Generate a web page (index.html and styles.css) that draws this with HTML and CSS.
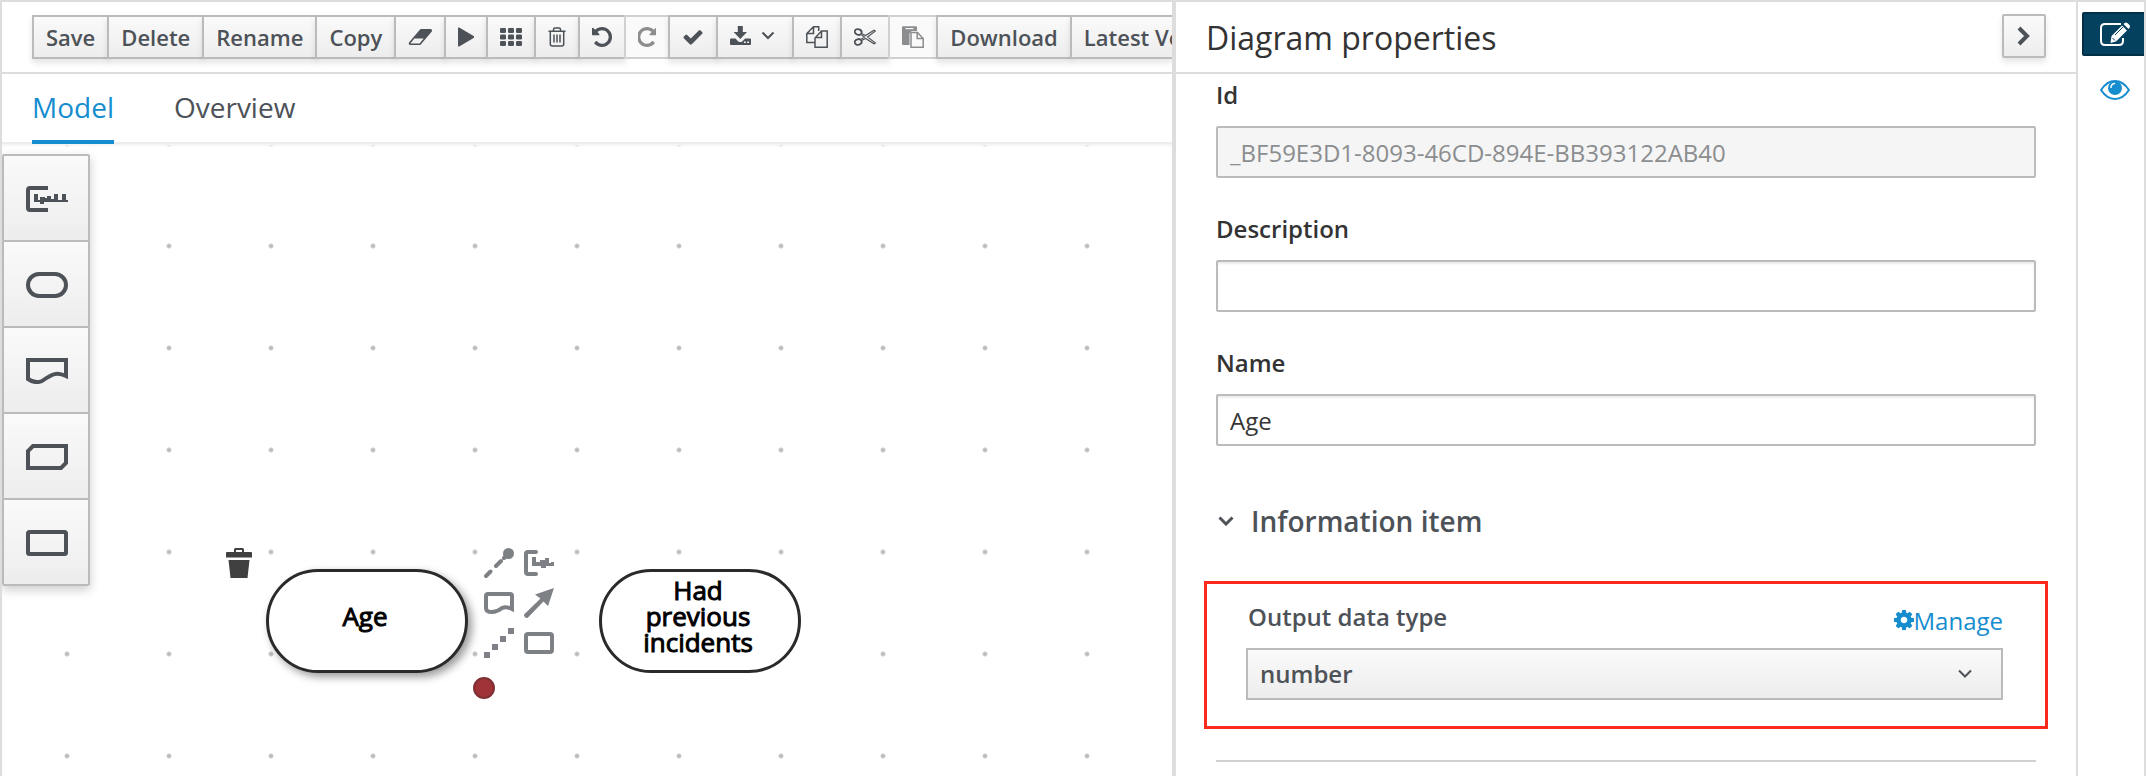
FILE: index.html
```html
<!DOCTYPE html>
<html lang="en">
<head>
<meta charset="utf-8">
<title>Diagram editor</title>
<link rel="stylesheet" href="styles.css">
</head>
<body>
<div class="workbench">
  <main class="editor">
    <div class="toolbar" role="toolbar" aria-label="Editor actions">
      <button class="btn" type="button">Save</button>
      <button class="btn" type="button">Delete</button>
      <button class="btn" type="button">Rename</button>
      <button class="btn" type="button">Copy</button>
      <button class="btn" type="button" aria-label="Clear">
        <svg width="24" height="16" viewBox="0 256 1984 1280" preserveAspectRatio="none"><path d="M960 1408l336-384h-768l-336 384h768zm1013-1077q15 34 9.500 71.500t-30.500 65.500l-896 1024q-38 44-96 44h-768q-38 0-69.500-20.500t-47.500-54.500q-15-34-9.500-71.500t30.500-65.500l896-1024q38-44 96-44h768q38 0 69.500 20.500t47.500 54.500z"/></svg>
      </button>
      <button class="btn" type="button" aria-label="Run">
        <svg width="16" height="20" viewBox="0 0 16 20"><path d="M0 1.200Q0 0 1.200.6L16 9.200q1 .8 0 1.600L1.200 19.400Q0 20 0 18.800z"/></svg>
      </button>
      <button class="btn" type="button" aria-label="Switch grid">
        <svg width="22" height="18" viewBox="0 0 22 18"><g><rect x="0" y="0" width="6" height="5" rx="1.300"/><rect x="8" y="0" width="6" height="5" rx="1.300"/><rect x="16" y="0" width="6" height="5" rx="1.300"/><rect x="0" y="6.500" width="6" height="5" rx="1.300"/><rect x="8" y="6.500" width="6" height="5" rx="1.300"/><rect x="16" y="6.500" width="6" height="5" rx="1.300"/><rect x="0" y="13" width="6" height="5" rx="1.300"/><rect x="8" y="13" width="6" height="5" rx="1.300"/><rect x="16" y="13" width="6" height="5" rx="1.300"/></g></svg>
      </button>
      <button class="btn" type="button" aria-label="Delete selection">
        <svg class="line" width="18" height="20" viewBox="0 0 18 20" stroke-width="1.500"><path d="M.5 4.200h17M5.500 4V2.500q0-1.500 1.500-1.500h4q1.500 0 1.500 1.500V4M2.300 4.500v12.500q0 2 2 2h9.400q2 0 2-2V4.500M6 7.500v8M9 7.500v8M12 7.500v8"/></svg>
      </button>
      <button class="btn" type="button" aria-label="Undo">
        <svg width="20" height="20" viewBox="128 128 1536 1536"><path d="M1664 896q0 156-61 298t-164 245-245 164-298 61q-172 0-327-72.500t-264-204.500q-7-10-6.500-22.500t8.500-20.500l137-138q10-9 25-9 16 2 23 12 73 95 179 147t225 52q104 0 198.500-40.500t163.500-109.500 109.500-163.500 40.500-198.500-40.500-198.500-109.500-163.500-163.500-109.500-198.500-40.500q-98 0-188 35.500t-160 101.500l137 138q31 30 14 69-17 40-59 40h-448q-26 0-45-19t-19-45v-448q0-42 40-59 39-17 69 14l130 129q107-101 244.500-156.500t284.500-55.500q156 0 298 61t245 164 164 245 61 298z"/></svg>
      </button>
      <button class="btn" type="button" aria-label="Redo" disabled>
        <svg width="18" height="20" viewBox="128 128 1536 1536" preserveAspectRatio="xMidYMid slice"><path transform="translate(1792 0) scale(-1 1)" d="M1664 896q0 156-61 298t-164 245-245 164-298 61q-172 0-327-72.500t-264-204.500q-7-10-6.500-22.500t8.500-20.500l137-138q10-9 25-9 16 2 23 12 73 95 179 147t225 52q104 0 198.500-40.500t163.500-109.500 109.500-163.500 40.500-198.500-40.500-198.500-109.500-163.500-163.500-109.500-198.500-40.500q-98 0-188 35.500t-160 101.500l137 138q31 30 14 69-17 40-59 40h-448q-26 0-45-19t-19-45v-448q0-42 40-59 39-17 69 14l130 129q107-101 244.500-156.500t284.500-55.500q156 0 298 61t245 164 164 245 61 298z"/></svg>
      </button>
      <button class="btn" type="button" aria-label="Validate">
        <svg width="22" height="22" viewBox="0 0 1792 1792"><path d="M1671 566q0 40-28 68l-724 724-136 136q-28 28-68 28t-68-28l-136-136-362-362q-28-28-28-68t28-68l136-136q28-28 68-28t68 28l294 295 656-657q28-28 68-28t68 28l136 136q28 28 28 68z"/></svg>
      </button>
      <button class="btn btn-menu" type="button" aria-label="Export">
        <svg width="21" height="22" viewBox="0 0 21 22"><path d="M7.800 0h5v6h4.200l-6.700 7L3.600 6h4.200zM1 12.500h4.500l2.600 2.700q2.200 1.800 4.400 0l2.600-2.700H20q1 0 1 1v4.500q0 1-1 1H1q-1 0-1-1v-4.500q0-1 1-1z"/><path class="hole" d="M14 15.500h1.800v1.600H14zM17.200 15.500H19v1.600h-1.800z"/></svg>
        <svg class="line" width="14" height="22" viewBox="0 0 14 22" stroke-width="2"><path d="M1.500 6.500L7 12l5.500-5.500"/></svg>
      </button>
      <button class="btn" type="button" aria-label="Copy selection">
        <svg class="line" width="22" height="22" viewBox="0 0 22 22" stroke-width="1.500"><path d="M9 16.500H.8V7.500L7.500.8h5.200V5M7.500 1v6.500H1M9 21.200V12l6.500-7h5.700v16.200zM15.500 5v6.500H9"/></svg>
      </button>
      <button class="btn" type="button" aria-label="Cut selection">
        <svg class="line" width="22" height="20" viewBox="0 0 22 20" stroke-width="1.800"><ellipse cx="4.200" cy="5" rx="3.500" ry="2.800" transform="rotate(18 4.200 5)"/><ellipse cx="4.200" cy="15" rx="3.500" ry="2.800" transform="rotate(-18 4.200 15)"/><path stroke-width="1.100" d="M7.500 6.500l4 2L20 3.200l1.500.8-8 6 8 6-1.500.8-8.500-5.300-4 2M7.500 8l3 2-3 2"/></svg>
      </button>
      <button class="btn" type="button" aria-label="Paste selection" disabled>
        <svg width="22" height="22" viewBox="0 0 22 22"><path d="M1 .3h13q1 0 1 1V5H9.800L7.500 7.500V19H1q-1 0-1-1V1.300q0-1 1-1z"/><path class="hole" d="M3.500 2h8v1.200h-8z"/><path fill="none" stroke="currentColor" stroke-width="1.500" d="M9 6.500h6.500l5.700 6v8.700H9zM15.200 6.500v6h6"/></svg>
      </button>
      <button class="btn" type="button">Download</button>
      <button class="btn btn-last" type="button">Latest Version</button>
    </div>
    <nav class="tabs">
      <a class="tab tab-active" href="#model">Model</a>
      <a class="tab" href="#overview">Overview</a>
    </nav>
    <div class="canvas">
      <div class="palette">
        <button class="palette-item" type="button" aria-label="Text annotation">
          <svg class="line" width="42" height="26" viewBox="0 0 42 26" stroke-width="4"><path d="M22 2H4Q2 2 2 4v18q0 2 2 2h18"/><path fill="currentColor" stroke="none" d="M8 8h4v6h2v-3h5v1h2v-2h4v3h3V8h4v6h4V8h4v6h2v2H18v2h-4v-2H8z"/></svg>
        </button>
        <button class="palette-item" type="button" aria-label="Input data">
          <svg class="line" width="42" height="26" viewBox="0 0 42 26" stroke-width="4"><rect x="2" y="2" width="38" height="22" rx="11"/></svg>
        </button>
        <button class="palette-item" type="button" aria-label="Knowledge source">
          <svg class="line" width="42" height="26" viewBox="0 0 42 26" stroke-width="4"><path d="M2 20V2h38v16q-8-4-14-1t-10 6q-7 3-14-2z"/></svg>
        </button>
        <button class="palette-item" type="button" aria-label="Business knowledge model">
          <svg class="line" width="42" height="26" viewBox="0 0 42 26" stroke-width="4"><path d="M7 2h33v17l-5 5H2V7z"/></svg>
        </button>
        <button class="palette-item" type="button" aria-label="Decision">
          <svg class="line" width="42" height="26" viewBox="0 0 42 26" stroke-width="4"><rect x="2" y="2" width="38" height="22" rx="1.500"/></svg>
        </button>
      </div>
      <button class="node-delete" type="button" aria-label="Remove node">
        <svg width="26" height="30" viewBox="0 0 26 30"><path d="M8 4V1.500Q8 0 9.500 0h7Q18 0 18 1.500V4h7q1 0 1 1v4.500H0V5q0-1 1-1zM10 2v2h6V2zM2.500 12h21l-2 18h-17z"/></svg>
      </button>
      <div class="node node-age">Age</div>
      <div class="node-tools">
        <button class="tool" type="button" aria-label="Association to source"><svg width="30" height="30" viewBox="0 0 30 30"><circle cx="24.500" cy="5.500" r="5.500"/><path class="stroke" d="M2 28l4.500-4.500M12 18l5-5M20 10l3-3"/></svg></button>
        <button class="tool" type="button" aria-label="Add text annotation"><svg width="30" height="30" viewBox="0 0 30 30"><path class="stroke" d="M12 4H4q-2 0-2 2v18q0 2 2 2h8"/><path d="M8 9h4v5h4v-2h5v-2h4v5h2v-1h3v4h-8v2h-5v-2H8z"/></svg></button>
        <button class="tool" type="button" aria-label="Add knowledge source"><svg width="30" height="30" viewBox="0 0 30 30"><path class="stroke" d="M4 6h22q2 0 2 2v13q-6-3-10-1-5 4-10 4Q2 24 2 20V8q0-2 2-2z"/></svg></button>
        <button class="tool" type="button" aria-label="Information requirement"><svg width="30" height="30" viewBox="0 0 30 30"><path d="M30 0l-6 18-4.500-4.500L3.500 30Q0 30 0 26.500l16.500-16L11 6.500z"/></svg></button>
        <button class="tool" type="button" aria-label="Association"><svg width="30" height="30" viewBox="0 0 30 30"><path d="M24 0h6v6h-6zM16 8h6v6h-6zM8 16h6v6H8zM0 24h6v6H0z"/></svg></button>
        <button class="tool" type="button" aria-label="Add decision"><svg width="30" height="30" viewBox="0 0 30 30"><rect class="stroke" x="2" y="6" width="26" height="18" rx="2"/></svg></button>
      </div>
      <span class="node-handle"></span>
      <div class="node node-incidents">Had<br>previous<br>incidents</div>
    </div>
  </main>
  <aside class="panel">
    <header class="panel-head">
      <h1 class="panel-title">Diagram properties</h1>
      <button class="collapse" type="button" aria-label="Collapse">
        <svg class="line" width="14" height="20" viewBox="0 0 14 20" stroke-width="4"><path d="M2 2l8 8-8 8"/></svg>
      </button>
    </header>
    <form class="form">
      <div class="field">
        <label class="label" for="id">Id</label>
        <input class="input" id="id" type="text" value="_BF59E3D1-8093-46CD-894E-BB393122AB40" disabled>
      </div>
      <div class="field">
        <label class="label" for="description">Description</label>
        <input class="input" id="description" type="text">
      </div>
      <div class="field">
        <label class="label" for="name">Name</label>
        <input class="input" id="name" type="text" value="Age">
      </div>
      <h2 class="section">
        <button class="section-toggle" type="button" aria-expanded="true">
          <svg class="line" width="16" height="10" viewBox="0 0 16 10" stroke-width="3"><path d="M1.500 1.500L8 8l6.500-6.500"/></svg>
          Information item
        </button>
      </h2>
      <div class="highlight">
        <div class="type-head">
          <label class="type-label" for="type">Output data type</label>
          <a class="manage" href="#manage"><svg width="20" height="20" viewBox="128 128 1536 1536"><path d="M1152 896q0-106-75-181t-181-75-181 75-75 181 75 181 181 75 181-75 75-181zm512-109v222q0 12-8 23t-20 13l-185 28q-19 54-39 91 35 50 107 138 10 12 10 25t-9 23q-27 37-99 108t-94 71q-12 0-26-9l-138-108q-44 23-91 38-16 136-29 186-7 28-36 28h-222q-14 0-24.500-8.500t-11.500-21.500l-28-184q-49-16-90-37l-141 107q-10 9-25 9-14 0-25-11-126-114-165-168-7-10-7-23 0-12 8-23 15-21 51-66.500t54-70.500q-27-50-41-99l-183-27q-13-2-21-12.500t-8-23.500v-222q0-12 8-23t19-13l186-28q14-46 39-92-40-57-107-138-10-12-10-24 0-10 9-23 26-36 98.500-107.500t94.500-71.500q13 0 26 10l138 107q44-23 91-38 16-136 29-186 7-28 36-28h222q14 0 24.500 8.500t11.500 21.500l28 184q49 16 90 37l142-107q9-9 24-9 13 0 25 10 129 119 165 170 7 8 7 22 0 12-8 23-15 21-51 66.500t-54 70.500q26 50 41 98l183 28q13 2 21 12.500t8 23.500z"/></svg>Manage</a>
        </div>
        <div class="select-wrap">
          <select class="select" id="type"><option>number</option></select>
          <svg class="line select-arrow" width="14" height="10" viewBox="0 0 14 10" stroke-width="2"><path d="M1 1.500l6 6 6-6"/></svg>
        </div>
      </div>
      <hr class="rule">
    </form>
  </aside>
  <nav class="rail" aria-label="Side panels">
    <button class="rail-btn rail-btn-active" type="button" aria-label="Properties">
      <svg width="30" height="24" viewBox="0 0 30 24"><path fill="none" stroke="currentColor" stroke-width="2" d="M21 2H5Q1 2 1 6v13q0 4 4 4h14q4 0 4-4v-3"/><path d="M22 3.500l5 5L16 19.500 10.500 21 11.500 14zM23.500 2q2.500-3 5 0 3 2.500 0 5z"/><path fill="none" stroke="#03415f" stroke-width="1" d="M15 13l8-8M12.500 16l2.500 2.500"/></svg>
    </button>
    <button class="rail-btn" type="button" aria-label="Preview">
      <svg width="30" height="20" viewBox="0 0 30 20"><path fill="none" stroke="currentColor" stroke-width="2" d="M1 10Q7 1 15 1t14 9q-6 9-14 9T1 10z"/><circle cx="15" cy="8" r="7"/><path fill="none" stroke="#fff" stroke-width="1.500" stroke-linecap="round" d="M11 7.500Q11 4 14.500 3.500"/></svg>
    </button>
  </nav>
</div>
</body>
</html>
```
FILE: styles.css
```css
* {
  box-sizing: border-box;
}

body {
  margin: 0;
  background: #fff;
  color: #333;
  font-family: "Open Sans", "Noto Sans", sans-serif;
  font-size: 22px;
}

button,
input,
select {
  font: inherit;
  color: inherit;
}

svg {
  display: block;
  flex: none;
  fill: currentColor;
}

.line {
  fill: none;
  stroke: currentColor;
}

.hole {
  fill: #f5f5f5;
}

.workbench {
  display: flex;
  height: 100vh;
  border: 2px solid #ddd;
  border-bottom: 0;
  overflow: hidden;
}

.editor {
  flex: 13 1 0;
  min-width: 0;
  display: flex;
  flex-direction: column;
}

.toolbar {
  flex: none;
  display: flex;
  align-items: center;
  height: 72px;
  padding-left: 30px;
  border-bottom: 2px solid #ddd;
  overflow: hidden;
}

.btn,
.collapse,
.palette-item {
  flex: none;
  display: flex;
  align-items: center;
  justify-content: center;
  border: 2px solid #bbb;
  background: linear-gradient(#fafafa, #ededed);
  color: #4d5258;
  box-shadow: 0 4px 6px rgba(3, 3, 3, 0.1);
}

.btn {
  height: 44px;
  padding: 0 12px;
  font-weight: 600;
  line-height: 32px;
  white-space: nowrap;
}

.btn + .btn {
  margin-left: -2px;
}

.btn:disabled {
  background: #fafafa;
  border-color: #d1d1d1;
  color: #8b8d8f;
  box-shadow: none;
}

.btn-menu {
  gap: 10px;
  padding-right: 17px;
}

.btn-last {
  flex: 0 1 auto;
  min-width: 0;
  justify-content: flex-start;
  padding-right: 0;
  border-right: 0;
  overflow: hidden;
}

.tabs {
  flex: none;
  display: flex;
  gap: 60px;
  height: 70px;
  padding-left: 30px;
  border-bottom: 2px solid #ededed;
}

.tab {
  height: 70px;
  padding-top: 13px;
  color: #4d5258;
  font-size: 28px;
  line-height: 40px;
  text-decoration: none;
}

.tab-active {
  border-bottom: 4px solid #158dcf;
  color: #158dcf;
}

.canvas {
  position: relative;
  flex: 1;
  background-image: radial-gradient(circle at 65px 51px, #bbb 1px, #ccc 2px, transparent 3px);
  background-size: 102px 102px;
  background-position: 0 51px;
  box-shadow: inset 0 2px 2px #f5f5f5;
  overflow: hidden;
}

.palette {
  position: absolute;
  top: 10px;
  left: 0;
  width: 88px;
  box-shadow: 0 4px 10px rgba(3, 3, 3, 0.2);
}

.palette-item {
  width: 100%;
  height: 88px;
  padding: 2px 0 0 2px;
  border-radius: 2px;
  box-shadow: none;
}

.palette-item + .palette-item {
  margin-top: -2px;
}

.node {
  position: absolute;
  top: 425px;
  display: flex;
  align-items: center;
  justify-content: center;
  width: 202px;
  height: 104px;
  padding: 0 4px 10px 0;
  border: 3px solid #2a2a2a;
  border-radius: 52px;
  background: #fff;
  color: #000;
  font-size: 26px;
  line-height: 26px;
  text-align: center;
  -webkit-text-stroke: 1px #000;
}

.node-age {
  left: 264px;
  box-shadow: 4px 4px 8px rgba(0, 0, 0, 0.4);
}

.node-incidents {
  left: 597px;
}

.node-delete {
  position: absolute;
  top: 404px;
  left: 224px;
  padding: 0;
  border: 0;
  background: none;
  color: #404040;
}

.node-tools {
  position: absolute;
  top: 404px;
  left: 482px;
  display: grid;
  grid-template-columns: 30px 30px;
  gap: 10px;
}

.tool {
  padding: 0;
  border: 0;
  background: #fff;
  color: #7d8085;
}

.stroke {
  fill: none;
  stroke: currentColor;
  stroke-width: 4px;
  stroke-linecap: round;
}

.node-handle {
  position: absolute;
  top: 533px;
  left: 471px;
  width: 22px;
  height: 22px;
  border: 2px solid #7f3035;
  border-radius: 50%;
  background: #a03338;
}

.panel {
  flex: 10 1 0;
  min-width: 0;
  border-left: 4px solid #ddd;
  border-right: 2px solid #ddd;
  overflow: hidden;
}

.panel-head {
  display: flex;
  align-items: center;
  justify-content: space-between;
  height: 72px;
  padding: 0 30px 2px;
  border-bottom: 2px solid #ddd;
}

.panel-title {
  margin: 0;
  padding-top: 4px;
  font-size: 32px;
  font-weight: 400;
  line-height: 44px;
}

.collapse {
  width: 44px;
  height: 44px;
  padding: 0;
  border-radius: 2px;
}

.form {
  padding: 4px 40px 0;
}

.field {
  display: flex;
  flex-direction: column;
  gap: 14px;
  margin-bottom: 34px;
}

.label {
  font-weight: 600;
  font-size: 24px;
  line-height: 34px;
}

.input {
  width: 100%;
  height: 52px;
  padding: 0 12px;
  border: 2px solid #bbb;
  border-radius: 2px;
  background: #fff;
  box-shadow: inset 0 2px 2px rgba(3, 3, 3, 0.08);
  color: #363636;
  font-size: 24px;
}

.input:disabled {
  background: #f5f5f5;
  box-shadow: none;
  color: #8b8d8f;
}

.section {
  margin: 0;
  padding-top: 19px;
}

.section-toggle {
  display: flex;
  align-items: center;
  gap: 17px;
  padding: 0 2px;
  border: 0;
  background: none;
  color: #4d5258;
  font-size: 28px;
  font-weight: 600;
  line-height: 44px;
}

.highlight {
  margin: 38px -12px 31px;
  padding: 19px 42px 26px;
  border: 3px solid #fc2a1c;
}

.type-head {
  display: flex;
  justify-content: space-between;
  height: 45px;
  margin-left: -3px;
}

.type-label {
  padding-left: 2px;
  color: #4d5258;
  font-size: 24px;
  font-weight: 600;
  line-height: 28px;
}

.manage {
  display: flex;
  align-items: center;
  height: 34px;
  color: #158dcf;
  font-size: 24px;
  text-decoration: none;
}

.select-wrap {
  display: grid;
  align-items: center;
  margin-left: -3px;
}

.select {
  grid-area: 1 / 1;
  width: 100%;
  height: 52px;
  padding: 0 12px;
  border: 2px solid #bbb;
  border-radius: 0;
  background: linear-gradient(#fafafa, #ededed);
  color: #4d5258;
  font-size: 24px;
  font-weight: 600;
  line-height: 32px;
  appearance: none;
}

.select-arrow {
  grid-area: 1 / 1;
  justify-self: end;
  margin-right: 31px;
  color: #4d5258;
  pointer-events: none;
}

.rule {
  height: 2px;
  margin: 0;
  border: 0;
  background: #d1d1d1;
}

.rail {
  flex: none;
  width: 66px;
  padding: 10px 0 0 4px;
}

.rail-btn {
  display: flex;
  align-items: center;
  width: 64px;
  height: 44px;
  margin-bottom: 12px;
  padding: 0 16px;
  border: 2px solid transparent;
  background: none;
  color: #158dcf;
}

.rail-btn-active {
  border-color: #022f46;
  border-radius: 2px;
  background: #03415f;
  color: #fff;
}
```
